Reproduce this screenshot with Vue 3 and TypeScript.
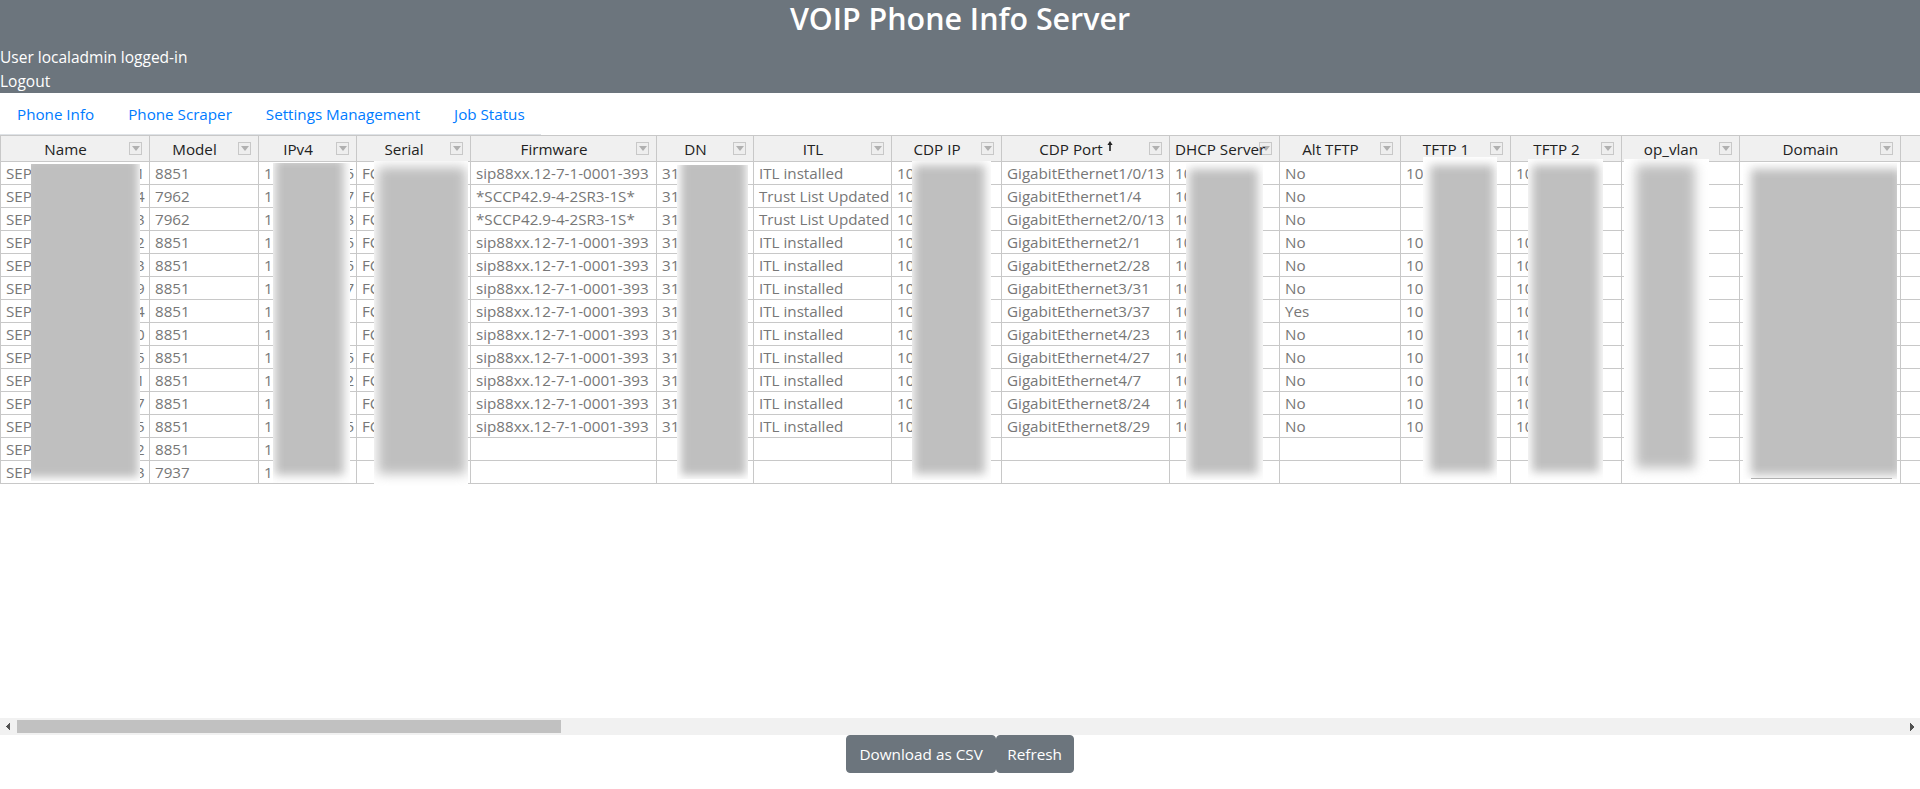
<template>
  <div class="page">
    <header class="banner">
      <h2 class="title">VOIP Phone Info Server</h2>
      <div>User localadmin logged-in</div>
      <div>Logout</div>
    </header>

    <nav class="tabs">
      <a v-for="tab in tabs" :key="tab" class="tab" href="#">{{ tab }}</a>
    </nav>

    <div class="grid-wrap">
      <div class="grid-scroll">
        <table class="grid">
          <colgroup>
            <col v-for="col in columns" :key="col.key" :style="{ width: col.width + 'px' }" />
          </colgroup>
          <thead>
            <tr>
              <th v-for="col in columns" :key="col.key">
                <template v-if="col.label">
                  <span class="label">{{ col.label }}<svg v-if="col.sorted" class="sort" width="6" height="10" viewBox="0 0 6 10"><path d="M3 0 L5.6 4 H3.8 V10 H2.2 V4 H0.4 Z" fill="#222" /></svg></span>
                  <span class="filter"><i></i></span>
                </template>
              </th>
            </tr>
          </thead>
          <tbody>
            <tr v-for="(row, i) in rows" :key="i">
              <td v-for="col in columns" :key="col.key">{{ row[col.key] }}</td>
            </tr>
          </tbody>
        </table>
      </div>
      <!-- redaction smudges from the original capture -->
      <div v-for="(r, i) in redactions" :key="i" class="smudge" :style="smudgeBox(r)">
        <div class="smudge-fill" :style="smudgeFill(r)"></div>
        <div v-if="r.edge" class="smudge-edge"></div>
      </div>
    </div>

    <div class="scrollbar">
      <span class="arrow arrow-left"></span>
      <div class="track"><div class="thumb"></div></div>
      <span class="arrow arrow-right"></span>
    </div>

    <footer class="actions">
      <button class="btn">Download as CSV</button>
      <button class="btn">Refresh</button>
    </footer>
  </div>
</template>

<script setup lang="ts">
interface Column {
  key: string
  label: string
  width: number
  sorted?: boolean
}

interface Redaction {
  x: number
  y: number
  w: number
  h: number
  inset: [number, number, number, number]
  blur: number
  edge?: boolean
}

type Row = Record<string, string>

const tabs = ['Phone Info', 'Phone Scraper', 'Settings Management', 'Job Status']

const columns: Column[] = [
  { key: 'name', label: 'Name', width: 149 },
  { key: 'model', label: 'Model', width: 109 },
  { key: 'ipv4', label: 'IPv4', width: 98 },
  { key: 'serial', label: 'Serial', width: 114 },
  { key: 'firmware', label: 'Firmware', width: 186 },
  { key: 'dn', label: 'DN', width: 97 },
  { key: 'itl', label: 'ITL', width: 138 },
  { key: 'cdpIp', label: 'CDP IP', width: 110 },
  { key: 'cdpPort', label: 'CDP Port', width: 168, sorted: true },
  { key: 'dhcp', label: 'DHCP Server', width: 110 },
  { key: 'altTftp', label: 'Alt TFTP', width: 121 },
  { key: 'tftp1', label: 'TFTP 1', width: 110 },
  { key: 'tftp2', label: 'TFTP 2', width: 111 },
  { key: 'opVlan', label: 'op_vlan', width: 118 },
  { key: 'domain', label: 'Domain', width: 161 },
  { key: 'rest', label: '', width: 4756 }
]

const sip = 'sip88xx.12-7-1-0001-393'
const sccp = '*SCCP42.9-4-2SR3-1S*'

// [name tail, model, ip tail, firmware, itl, port, alt tftp, has tftp]
const raw: [string, string, string, string, string, string, string, boolean][] = [
  ['1', '8851', '5', sip, 'ITL installed', '1/0/13', 'No', true],
  ['4', '7962', '7', sccp, 'Trust List Updated', '1/4', 'No', false],
  ['3', '7962', '3', sccp, 'Trust List Updated', '2/0/13', 'No', false],
  ['2', '8851', '5', sip, 'ITL installed', '2/1', 'No', true],
  ['3', '8851', '5', sip, 'ITL installed', '2/28', 'No', true],
  ['9', '8851', '7', sip, 'ITL installed', '3/31', 'No', true],
  ['4', '8851', '', sip, 'ITL installed', '3/37', 'Yes', true],
  ['0', '8851', '', sip, 'ITL installed', '4/23', 'No', true],
  ['5', '8851', '5', sip, 'ITL installed', '4/27', 'No', true],
  ['1', '8851', '2', sip, 'ITL installed', '4/7', 'No', true],
  ['7', '8851', '', sip, 'ITL installed', '8/24', 'No', true],
  ['5', '8851', '5', sip, 'ITL installed', '8/29', 'No', true],
  ['2', '8851', '', '', '', '', '', false],
  ['3', '7937', '', '', '', '', '', false]
]

const rows: Row[] = raw.map(([tail, model, ip, firmware, itl, port, alt, tftp]) => ({
  name: 'SEP000000000000' + tail,
  model,
  ipv4: ip ? '10.0.000.00' + ip : '10',
  serial: firmware ? 'FC' : '',
  firmware,
  dn: firmware ? '31' : '',
  itl,
  cdpIp: firmware ? '10' : '',
  cdpPort: port ? 'GigabitEthernet' + port : '',
  dhcp: firmware ? '10' : '',
  altTftp: alt,
  tftp1: tftp ? '10' : '',
  tftp2: tftp ? '10' : '',
  opVlan: '',
  domain: '',
  rest: ''
}))

// y is relative to the grid's top edge (135)
const redactions: Redaction[] = [
  { x: 31, y: 29, w: 109, h: 317, inset: [-6, 2, 4, -6], blur: 4 },
  { x: 273, y: 28, w: 77, h: 320, inset: [-4, 6, 8, 2], blur: 5 },
  { x: 374, y: 26, w: 94, h: 325, inset: [6, 2, 12, 4], blur: 6 },
  { x: 677, y: 30, w: 71, h: 314, inset: [-6, 2, 4, 4], blur: 4 },
  { x: 912, y: 26, w: 79, h: 319, inset: [4, 6, 6, 2], blur: 5 },
  { x: 1186, y: 28, w: 77, h: 317, inset: [6, 5, 6, 3], blur: 5 },
  { x: 1423, y: 22, w: 74, h: 323, inset: [8, 3, 8, 7], blur: 5 },
  { x: 1528, y: 24, w: 75, h: 321, inset: [6, 4, 8, 4], blur: 5 },
  { x: 1624, y: 24, w: 85, h: 321, inset: [6, 14, 12, 12], blur: 6 },
  { x: 1743, y: 28, w: 154, h: 316, inset: [6, -4, 4, 8], blur: 5, edge: true }
]

const smudgeBox = (r: Redaction) => ({
  left: r.x + 'px',
  top: r.y + 'px',
  width: r.w + 'px',
  height: r.h + 'px'
})

const smudgeFill = (r: Redaction) => ({
  top: r.inset[0] + 'px',
  right: r.inset[1] + 'px',
  bottom: r.inset[2] + 'px',
  left: r.inset[3] + 'px',
  filter: `blur(${r.blur}px)`
})
</script>

<style>
html,
body {
  margin: 0;
  overflow: hidden;
}
</style>

<style scoped>
.page {
  height: 789px;
  display: flex;
  flex-direction: column;
  font-family: "Open Sans", "Noto Sans", "Liberation Sans", sans-serif;
  font-size: 15.2px;
  line-height: 24px;
  color: #212529;
  background: #fff;
}

.banner {
  height: 93px;
  background: #6c757d;
  color: #fff;
  flex: none;
  font-size: 15.5px;
}

.title {
  margin: 0 0 7px;
  font-size: 30.4px;
  line-height: 38px;
  font-weight: 600;
  text-align: center;
}

.tabs {
  flex: none;
  width: 541px;
  height: 42px;
  box-sizing: border-box;
  display: flex;
  border-bottom: 1px solid #dee2e6;
}

.tab {
  padding: 10px 17px;
  line-height: 23px;
  color: #007bff;
  text-decoration: none;
  white-space: nowrap;
}

.grid-wrap {
  position: relative;
  flex: none;
  height: 583px;
}

.grid-scroll {
  height: 100%;
  overflow: hidden;
}

.grid {
  width: 6656px;
  table-layout: fixed;
  border-collapse: collapse;
  font-size: 15.2px;
}

.grid th {
  position: relative;
  height: 26px;
  box-sizing: border-box;
  padding: 0 24px 0 5px;
  background: #f0f0f0;
  border: 1px solid #c8c8c8;
  font-weight: 400;
  color: #222;
  text-align: center;
  white-space: nowrap;
}

.label {
  position: relative;
  z-index: 1;
  display: inline-block;
}

.sort {
  margin-left: 4px;
  vertical-align: 4px;
}

.filter {
  position: absolute;
  top: 6px;
  right: 7px;
  width: 13px;
  height: 13px;
  box-sizing: border-box;
  display: flex;
  align-items: center;
  justify-content: center;
  background: #eee;
  border: 1px solid #c8c8c8;
}

.filter i {
  border-left: 4px solid transparent;
  border-right: 4px solid transparent;
  border-top: 5px solid #b0b0b0;
}

.grid td {
  height: 23px;
  box-sizing: border-box;
  padding: 0 5px;
  border: 1px solid #c8c8c8;
  color: #777;
  line-height: 22px;
  white-space: nowrap;
}

.smudge {
  position: absolute;
  overflow: hidden;
  background: #fff;
}

.smudge-fill {
  position: absolute;
  background: #bfbfbf;
}

.smudge-edge {
  position: absolute;
  left: 8px;
  right: 5px;
  bottom: 0;
  height: 1px;
  background: #b0b0b0;
}

.scrollbar {
  flex: none;
  height: 17px;
  display: flex;
  align-items: center;
  background: #f1f1f1;
}

.arrow {
  flex: none;
  width: 17px;
  height: 8px;
  background-repeat: no-repeat;
  background-size: 4px 4px;
}

.arrow-left {
  background-image: linear-gradient(to bottom right, transparent 50%, #505050 50%),
    linear-gradient(to top right, transparent 50%, #505050 50%);
  background-position: 6px 0, 6px 4px;
}

.arrow-right {
  background-image: linear-gradient(to bottom left, transparent 50%, #505050 50%),
    linear-gradient(to top left, transparent 50%, #505050 50%);
  background-position: 7px 0, 7px 4px;
}

.track {
  flex: 1;
  height: 13px;
}

.thumb {
  width: 544px;
  height: 100%;
  background: #c1c1c1;
}

.actions {
  flex: none;
  display: flex;
  justify-content: center;
}

.btn {
  height: 38px;
  padding: 0 12px;
  border: 1px solid #6c757d;
  border-radius: 4px;
  background: #6c757d;
  color: #fff;
  font: inherit;
  font-size: 15.3px;
}

.btn + .btn {
  padding: 0 10.5px;
}
</style>
